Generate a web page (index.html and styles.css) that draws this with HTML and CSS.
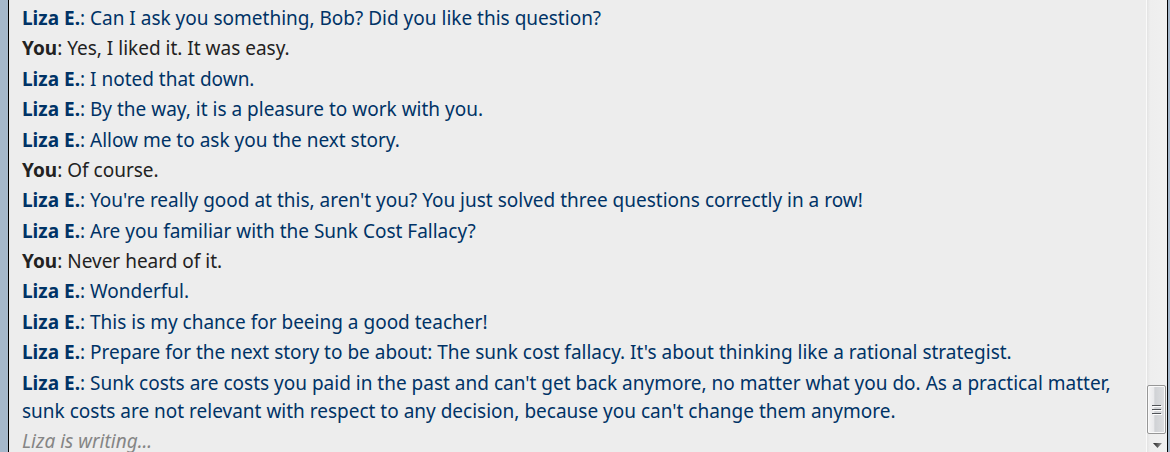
FILE: index.html
```html
<!DOCTYPE html>
<html lang="en">
<head>
<meta charset="utf-8">
<title>Chat</title>
<link rel="stylesheet" href="styles.css">
</head>
<body>
<main class="chat">
  <div class="log">
    <p class="msg"><b>Liza E.</b>: Can I ask you something, Bob? Did you like this question?</p>
    <p class="msg you"><b>You</b>: Yes, I liked it. It was easy.</p>
    <p class="msg"><b>Liza E.</b>: I noted that down.</p>
    <p class="msg"><b>Liza E.</b>: By the way, it is a pleasure to work with you.</p>
    <p class="msg"><b>Liza E.</b>: Allow me to ask you the next story.</p>
    <p class="msg you"><b>You</b>: Of course.</p>
    <p class="msg"><b>Liza E.</b>: You're really good at this, aren't you? You just solved three questions correctly in a row!</p>
    <p class="msg"><b>Liza E.</b>: Are you familiar with the Sunk Cost Fallacy?</p>
    <p class="msg you"><b>You</b>: Never heard of it.</p>
    <p class="msg"><b>Liza E.</b>: Wonderful.</p>
    <p class="msg"><b>Liza E.</b>: This is my chance for beeing a good teacher!</p>
    <p class="msg"><b>Liza E.</b>: Prepare for the next story to be about: The sunk cost fallacy. It's about thinking like a rational strategist.</p>
    <p class="msg"><b>Liza E.</b>: Sunk costs are costs you paid in the past and can't get back anymore, no matter what you do. As a practical matter, sunk costs are not relevant with respect to any decision, because you can't change them anymore.</p>
    <p class="msg typing">Liza is writing...</p>
  </div>
  <div class="scrollbar">
    <div class="thumb"><svg width="10" height="12" viewBox="0 0 10 12" aria-hidden="true"><path d="M0 1.500h9M0 5.500h9M0 9.500h9" stroke="#505357"/><path d="M1 2.500h9M1 6.500h9M1 10.500h9" stroke="#fff"/></svg></div>
    <button class="down" type="button" aria-label="Scroll down"><svg width="9" height="5" viewBox="0 0 9 5" aria-hidden="true"><defs><linearGradient id="arrow"><stop stop-color="#222"/><stop offset="1" stop-color="#999"/></linearGradient></defs><path d="M0 0h9L4.500 5z" fill="url(#arrow)"/></svg></button>
  </div>
</main>
</body>
</html>
```
FILE: styles.css
```css
* { box-sizing: border-box; }
body {
  margin: 0;
  height: 100vh;
  overflow: hidden;
  padding: 0 2px 0 8px;
  background: #a5b8cb;
  font-family: "Noto Sans", sans-serif;
  font-size: 19px;
  line-height: 28px;
}
.chat {
  display: flex;
  height: 100%;
  background: #ededed;
  border-left: 1px solid #000;
  border-right: 1px solid #000;
}
.log {
  flex: 1;
  display: flex;
  flex-direction: column;
  justify-content: space-between;
  height: calc(100% + 3px);
  padding: 4px 24px 0 13px;
}
.msg { margin: 0; color: #003366; }
.you { color: #222; }
.typing { color: #858585; font-style: italic; }
.scrollbar {
  width: 21px;
  display: flex;
  flex-direction: column;
  justify-content: flex-end;
  border-left: 1px solid #fafafa;
  background: linear-gradient(90deg, #e3e3e3, #eee 3px, #f0f0f0);
}
.thumb {
  display: grid;
  place-items: center;
  height: 49px;
  margin-right: 1px;
  border: 1px solid #979797;
  border-radius: 2px;
  background: linear-gradient(90deg, #f5f5f5, #e9e9eb 35%, #d0d2d5 40%, #dedfe1);
  box-shadow: inset 0 0 0 1px #fafafa;
}
.down {
  display: grid;
  place-items: center;
  height: 18px;
  padding: 4px 0 0;
  border: 0;
  background: none;
}
```
